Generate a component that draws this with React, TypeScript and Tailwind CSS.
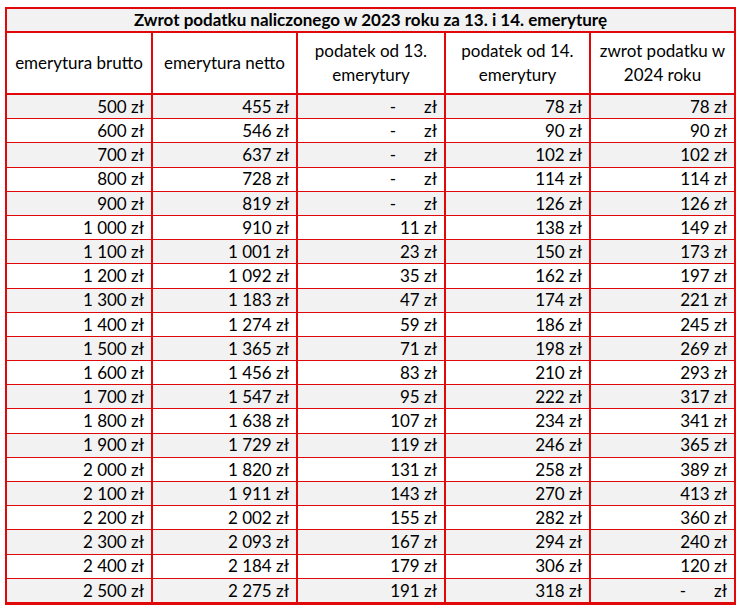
const brutto = [500, 600, 700, 800, 900, 1000, 1100, 1200, 1300, 1400, 1500, 1600, 1700, 1800, 1900, 2000, 2100, 2200, 2300, 2400, 2500]
const netto = [455, 546, 637, 728, 819, 910, 1001, 1092, 1183, 1274, 1365, 1456, 1547, 1638, 1729, 1820, 1911, 2002, 2093, 2184, 2275]
const tax13 = [0, 0, 0, 0, 0, 11, 23, 35, 47, 59, 71, 83, 95, 107, 119, 131, 143, 155, 167, 179, 191]
const tax14 = [78, 90, 102, 114, 126, 138, 150, 162, 174, 186, 198, 210, 222, 234, 246, 258, 270, 282, 294, 306, 318]
const refund = [78, 90, 102, 114, 126, 149, 173, 197, 221, 245, 269, 293, 317, 341, 365, 389, 413, 360, 240, 120, 0]

const widths = ['w-[146px]', 'w-[145px]', 'w-[148px]', 'w-[145px]', 'w-[143px]']

function fmt(n: number) {
  return n.toString().replace(/\B(?=(\d{3})+(?!\d))/g, ' ')
}

function Money({ value }: { value: number }) {
  if (value === 0) {
    return (
      <>
        <span>-</span>
        <span className="ml-[28px]">zł</span>
      </>
    )
  }
  return <span>{fmt(value)} zł</span>
}

function Cell({ i, last, children }: { i: number; last?: boolean; children: React.ReactNode }) {
  return (
    <div
      className={`${widths[i]} flex items-center justify-end pr-[7px] ${last ? '' : 'border-r-2 border-[#e00808]'}`}
    >
      {children}
    </div>
  )
}

export default function App() {
  return (
    <div className="w-[745px] h-[611px] bg-white pt-[7px] pl-[5px]" style={{ fontFamily: 'Lato, "Open Sans", sans-serif' }}>
      <div className="w-[731px] border-2 border-[#e00808] text-[17px] text-black">
        <div className="h-[24px] border-b-2 border-[#e00808] bg-[#f2f2f2] flex items-center justify-center font-bold">
          Zwrot podatku naliczonego w 2023 roku za 13. i 14. emeryturę
        </div>
        <div className="h-[62px] border-b-2 border-[#e00808] flex text-center leading-[24px]">
          {['emerytura brutto', 'emerytura netto', 'podatek od 13. emerytury', 'podatek od 14. emerytury', 'zwrot podatku w 2024 roku'].map((label, i) => (
            <div
              key={label}
              className={`${widths[i]} flex items-center justify-center px-2 ${i < 4 ? 'border-r-2 border-[#e00808]' : ''}`}
            >
              {label}
            </div>
          ))}
        </div>
        {brutto.map((b, r) => (
          <div
            key={b}
            className={`h-[24.2px] flex border-b border-[#e00808] ${r % 2 === 0 ? 'bg-[#f2f2f2]' : 'bg-white'}`}
          >
            <Cell i={0}><Money value={b} /></Cell>
            <Cell i={1}><Money value={netto[r]} /></Cell>
            <Cell i={2}><Money value={tax13[r]} /></Cell>
            <Cell i={3}><Money value={tax14[r]} /></Cell>
            <Cell i={4} last><Money value={refund[r]} /></Cell>
          </div>
        ))}
      </div>
    </div>
  )
}
